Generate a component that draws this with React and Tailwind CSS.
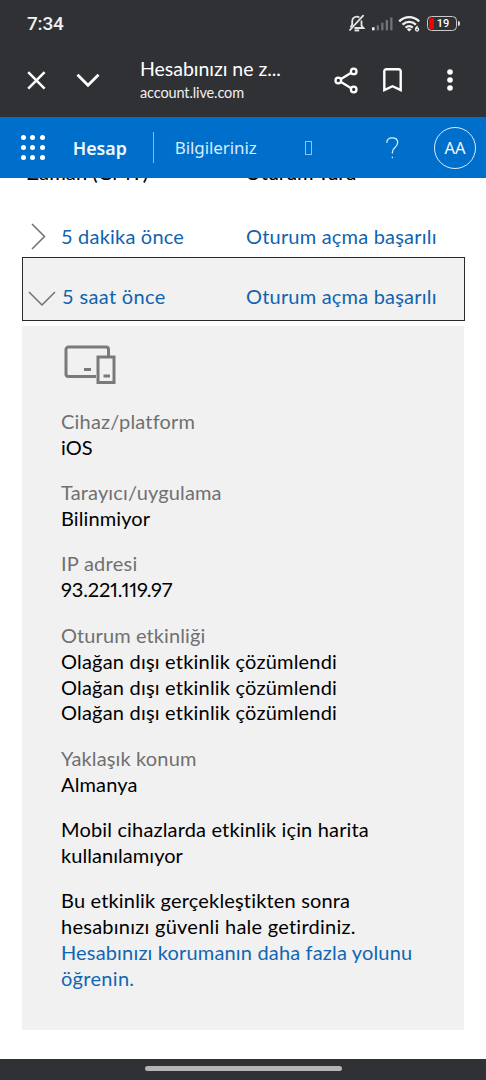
import { useState } from "react";

// --- DATA ---
const details = [
  {
    label: "Cihaz/platform",
    labelClass: "tracking-[0.2px]",
    lines: [{ text: "iOS", className: "tracking-[0.1px]" }],
  },
  {
    label: "Tarayıcı/uygulama",
    labelClass: "tracking-[0.15px]",
    lines: [{ text: "Bilinmiyor", className: "tracking-[0.1px]" }],
  },
  {
    label: "IP adresi",
    labelClass: "tracking-[0.25px]",
    lines: [{ text: "93.221.119.97", className: "proportional-nums tracking-[-0.15px]" }],
  },
  {
    label: "Oturum etkinliği",
    labelClass: "tracking-[0.1px]",
    lines: [
      { text: "Olağan dışı etkinlik çözümlendi", className: "tracking-[0.2px]" },
      { text: "Olağan dışı etkinlik çözümlendi", className: "tracking-[0.2px]" },
      { text: "Olağan dışı etkinlik çözümlendi", className: "tracking-[0.2px]" },
    ],
  },
  {
    label: "Yaklaşık konum",
    labelClass: "tracking-[0.15px]",
    lines: [{ text: "Almanya", className: "tracking-[0.15px]" }],
  },
];

// --- ICONS ---
const BellOffIcon = () => (
  <svg width="18" height="19" viewBox="0 0 18 19" fill="none" stroke="#e6e6e8" strokeWidth="1.8">
    <path d="M4.2 11.6V7.2C4.2 4.6 6.2 2.6 8.8 2.6c1 0 1.8.3 2.6.8M13.5 6.4v5.2l2 2.4H6.5" />
    <path d="M4.2 10.8 2.5 13.4" />
    <path d="M1.5 16.5 15.6 1.2" />
    <path d="M6.6 16.4h4.6" strokeWidth="2" />
  </svg>
);

const SignalIcon = () => (
  <svg width="21" height="14" viewBox="0 0 21 14" fill="#727377">
    <rect x="0" y="10.3" width="2.6" height="3" fill="#f2f2f2" />
    <rect x="4.7" y="8.3" width="2.3" height="5" />
    <rect x="9.2" y="5.7" width="2.3" height="7.6" />
    <rect x="13.7" y="3" width="2.3" height="10.3" />
    <rect x="18.2" y="0.5" width="2.3" height="12.8" />
  </svg>
);

const WifiIcon = () => (
  <svg width="23" height="18" viewBox="0 0 23 18" fill="none" stroke="#f2f2f2" strokeWidth="2.3">
    <path d="M1.2 6.4C7 .8 15.4.8 21.2 6.4" />
    <path d="M4.5 9.6c4-3.7 9.4-3.7 13.4 0" />
    <path d="M7.6 12.7c2.3-2 4.9-2 7.2 0" />
    <path d="M8.8 14.2a3.6 3.6 0 0 1 4.8 0l-2.4 2.4z" fill="#f2f2f2" stroke="none" />
    <path d="M19.6 11c-1.5 1.2-2 2.3-2 3.5" strokeWidth="1.3" />
    <circle cx="19.1" cy="14.5" r="1.5" strokeWidth="1.3" />
  </svg>
);

const ShareIcon = () => (
  <svg width="25" height="27" viewBox="0 0 25 27" fill="none" stroke="#fff" strokeWidth="2.3">
    <path d="M7 12 17.2 5.8M7 15l10.2 6.2" />
    <circle cx="4.3" cy="13.5" r="2.8" />
    <circle cx="19.7" cy="4.4" r="2.8" />
    <circle cx="19.7" cy="22.5" r="2.8" />
  </svg>
);

const DevicesIcon = () => (
  <svg width="54" height="40" viewBox="0 0 54 40" fill="none" stroke="#7a7a7a" strokeWidth="3">
    <path d="M33 31.5H5.5a2.5 2.5 0 0 1-2.5-2.5V4.5A2.5 2.5 0 0 1 5.5 2H43a2.5 2.5 0 0 1 2.5 2.5V11" />
    <rect x="35" y="12" width="16" height="25.5" />
    <path d="M21 24.5h7M40.5 31h6.5" />
  </svg>
);

// --- SECTIONS ---
const BrowserBar = () => (
  <div className="h-[117px] shrink-0 bg-[#303135] text-white">
    {/* Status bar */}
    <div className="flex h-[46px] items-center pl-[27px] pr-[26px] pt-[1px]">
      <span className="w-[37px] whitespace-nowrap font-['Roboto'] text-[19px] font-medium leading-none tracking-[-0.2px] text-[#f0f0f0]">
        7:34
      </span>
      <div className="ml-auto flex items-center">
        <BellOffIcon />
        <div className="ml-[6px]">
          <SignalIcon />
        </div>
        <div className="ml-[5px]">
          <WifiIcon />
        </div>
        <div className="ml-[6px] flex h-[15px] w-[30px] items-center rounded-[4.5px] border-[1.5px] border-[#c9c9cb] p-[1px]">
          <span className="h-full w-[5px] rounded-l-[2px] bg-[#f00000]" />
          <span className="flex-1 pr-[3px] text-center font-['Roboto'] text-[11px] font-medium leading-none">19</span>
        </div>
        <span className="ml-[1px] h-[5px] w-[2px] rounded-r bg-[#e0e0e0]" />
      </div>
    </div>

    {/* Page title and actions */}
    <div className="flex h-[68px] items-center pl-[27px] pr-[33px]">
      <svg width="19" height="19" viewBox="0 0 19 19" fill="none" stroke="#fff" strokeWidth="2.5">
        <path d="m1.2 1.2 16.4 16.4M17.6 1.2 1.2 17.6" />
      </svg>
      <svg className="ml-[30px]" width="24" height="15" viewBox="0 0 24 15" fill="none" stroke="#fff" strokeWidth="2.8">
        <path d="m1.5 1.7 10.5 10.6L22.5 1.7" />
      </svg>
      <div className="ml-[40px] w-[160px] whitespace-nowrap pt-[2px] font-['Lato']">
        <div className="text-[19.5px] leading-[24px] tracking-[-0.03px]">Hesabınızı ne z...</div>
        <div className="text-[14.5px] leading-[24px] tracking-[-0.12px] text-[#f0f0f0]">account.live.com</div>
      </div>
      <div className="ml-[34px]">
        <ShareIcon />
      </div>
      <svg className="ml-[24px]" width="19" height="24" viewBox="0 0 19 24" fill="none" stroke="#fff" strokeWidth="2.4">
        <path d="M1.3 3.2a2 2 0 0 1 2-2h12.4a2 2 0 0 1 2 2V22l-8.2-3.8L1.3 22z" />
      </svg>
      <svg className="ml-auto" width="6" height="22" viewBox="0 0 6 22" fill="#fff">
        <circle cx="3" cy="3" r="2.8" />
        <circle cx="3" cy="11" r="2.8" />
        <circle cx="3" cy="19" r="2.8" />
      </svg>
    </div>
  </div>
);

const AccountHeader = () => (
  <header className="relative z-10 flex h-[61px] shrink-0 items-center bg-[#006fcb] pl-[20.5px] pr-[10px] font-['Noto_Sans'] text-[#f4f9ff]">
    <div className="grid grid-cols-3 gap-[4.6px]">
      {Array.from({ length: 9 }, (_, i) => (
        <span key={i} className="size-[5px] rounded-full bg-white" />
      ))}
    </div>
    <span className="ml-[28px] w-[55px] whitespace-nowrap pt-[1px] text-[17.8px] font-semibold">Hesap</span>
    <span className="ml-[25px] h-[31px] w-px bg-[#86bcec]" />
    <span className="ml-[21px] w-[83px] whitespace-nowrap pt-[1px] text-[17px] tracking-[-0.08px] text-[#d9ebfc]">
      Bilgileriniz
    </span>
    <span className="ml-[47px] h-[14px] w-[7px] border border-[#8cc4f4]" />
    <svg className="ml-[74px]" width="13" height="22" viewBox="0 0 13 22" fill="none" stroke="#d9ebfc" strokeWidth="1.3">
      <path d="M.7 5.8C.9 2.7 3.1.8 6.2.8c3.2 0 5.5 1.9 5.5 4.8 0 4.8-5.3 5-5.3 9.3v1.6" />
      <path d="M6.4 19.6v1.6" />
    </svg>
    <span className="ml-auto flex size-[42px] items-center justify-center rounded-full border border-[#d8ebfb] pt-[2px] text-[16.5px]">
      AA
    </span>
  </header>
);

const App = () => {
  const [expanded, setExpanded] = useState(true);

  return (
    <div className="flex h-[1080px] w-[486px] flex-col overflow-hidden bg-white">
      <BrowserBar />
      <AccountHeader />

      <main className="min-h-0 flex-1 px-[22px] font-['Lato'] text-[20px] leading-[25.9px]">
        {/* Table head, scrolled beneath the header */}
        <div className="-mt-[18px] flex h-[27px] whitespace-nowrap font-medium text-black">
          <span className="w-[223px] pl-[5px] tracking-[0.1px]">Zaman (GMT)</span>
          <span className="tracking-[-0.2px]">Oturum Türü</span>
        </div>

        {/* Collapsed row */}
        <div className="flex h-[70px] items-end whitespace-nowrap pb-[7px] text-[#1063ae]">
          <svg className="ml-[9px]" width="15" height="27" viewBox="0 0 15 27" fill="none" stroke="#707070" strokeWidth="1.5">
            <path d="m1 1 12.5 12.5L1 26" />
          </svg>
          <span className="ml-[15px] w-[185px] tracking-[0.2px]">5 dakika önce</span>
          <span className="tracking-[0.2px]">Oturum açma başarılı</span>
        </div>

        {/* Expanded row */}
        <button
          className="flex h-[64px] w-[442.5px] items-end whitespace-nowrap border-[1.3px] border-[#2a2a2a] bg-[#f1f1f1] pb-[10px] text-left text-[#1063ae]"
          onClick={() => setExpanded(!expanded)}
        >
          <svg className="mb-[3px] ml-[5px]" width="28" height="16" viewBox="0 0 28 16" fill="none" stroke="#707070" strokeWidth="1.5">
            <path d="m1 1 13 13L27 1" />
          </svg>
          <span className="ml-[6px] w-[184px] tracking-[0.35px]">5 saat önce</span>
          <span className="tracking-[0.2px]">Oturum açma başarılı</span>
        </button>

        {/* Activity details */}
        {expanded && (
          <div className="mt-[5px] flex h-[704px] flex-col gap-[19.4px] bg-[#f1f1f1] pl-[39px] pt-[19px] text-black">
            <div className="mb-[4.7px] ml-[2px] h-[40px]">
              <DevicesIcon />
            </div>
            {details.map((item) => (
              <div key={item.label} className="whitespace-nowrap">
                <div className={`text-[#707070] ${item.labelClass}`}>{item.label}</div>
                {item.lines.map((line, idx) => (
                  <div key={idx} className={line.className}>
                    {line.text}
                  </div>
                ))}
              </div>
            ))}
            <div className="whitespace-nowrap">
              <div className="tracking-[0.16px]">Mobil cihazlarda etkinlik için harita</div>
              <div className="tracking-[0.05px]">kullanılamıyor</div>
            </div>
            <div className="whitespace-nowrap">
              <div className="tracking-[0.17px]">Bu etkinlik gerçekleştikten sonra</div>
              <div className="tracking-[0.25px]">hesabınızı güvenli hale getirdiniz.</div>
              <a href="#" className="text-[#1066b4]">
                <div className="tracking-[0.16px]">Hesabınızı korumanın daha fazla yolunu</div>
                <div className="tracking-[0.3px]">öğrenin.</div>
              </a>
            </div>
          </div>
        )}
      </main>

      {/* Gesture bar */}
      <div className="flex h-[21px] shrink-0 justify-center bg-[#303135] pt-[7px]">
        <div className="h-[5px] w-[197px] rounded-full bg-[#b5b5b5]" />
      </div>
    </div>
  );
};

export default App;
